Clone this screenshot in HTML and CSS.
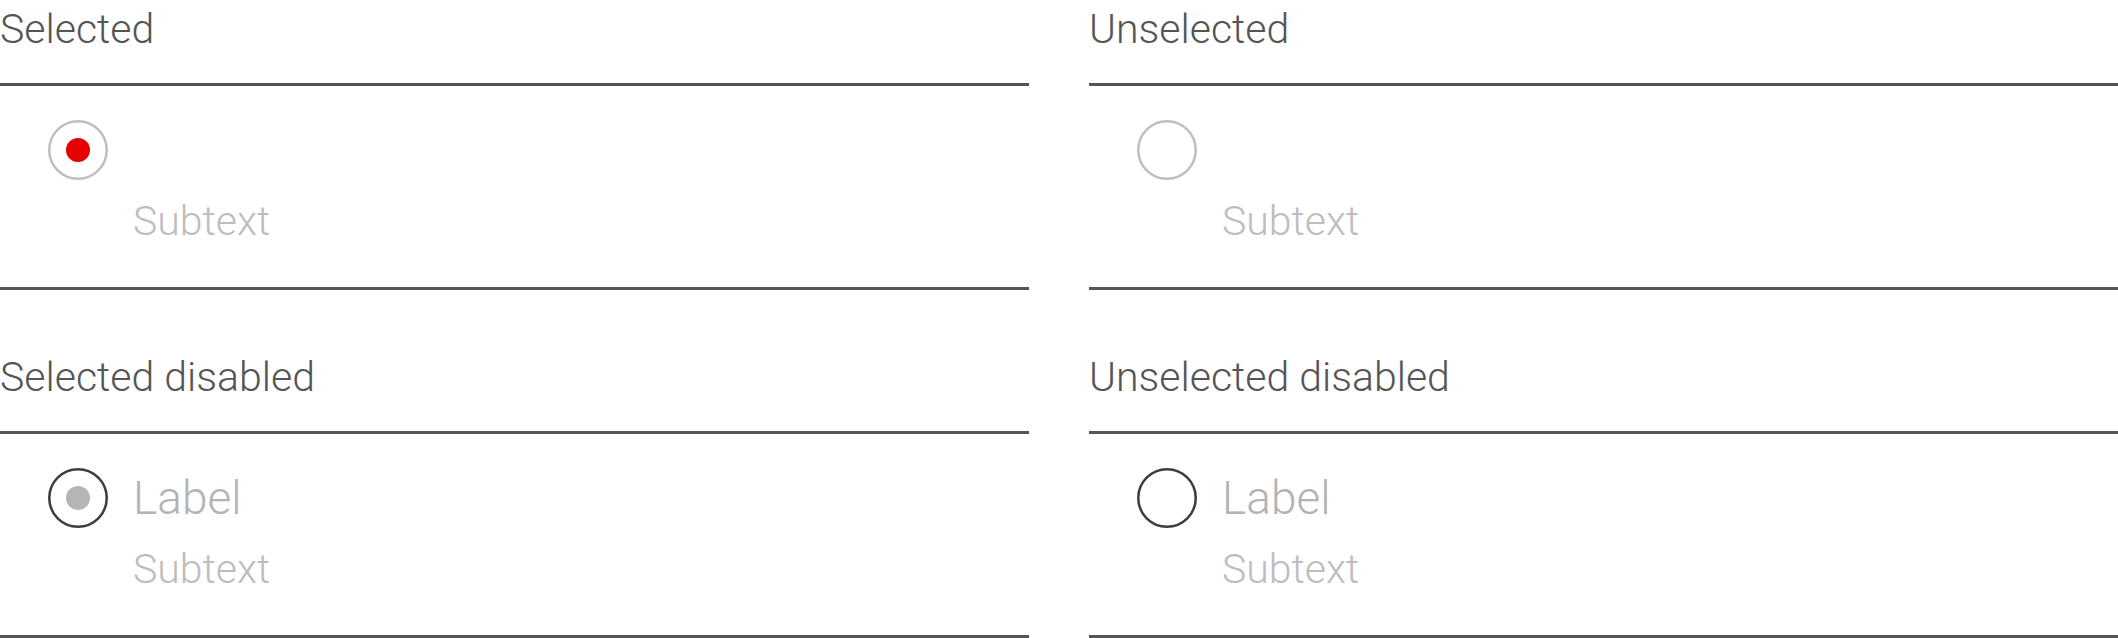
FILE: index.html
```html
<!DOCTYPE html>
<html>
<head>
<meta charset="utf-8">
<link rel="stylesheet" href="styles.css">
</head>
<body>
<div class="grid">
  <section class="block">
    <div class="title">Selected</div>
    <div class="item">
      <svg class="radio" viewBox="0 0 60 60" width="60" height="60"><circle class="ring ring-light" cx="30" cy="30" r="28.75"/><circle class="dot-red" cx="30" cy="30" r="12"/></svg>
      <div class="texts">
        <div class="label"></div>
        <div class="sub">Subtext</div>
      </div>
    </div>
  </section>
  <section class="block">
    <div class="title">Unselected</div>
    <div class="item">
      <svg class="radio" viewBox="0 0 60 60" width="60" height="60"><circle class="ring ring-light" cx="30" cy="30" r="28.75"/></svg>
      <div class="texts">
        <div class="label"></div>
        <div class="sub">Subtext</div>
      </div>
    </div>
  </section>
  <section class="block">
    <div class="title">Selected disabled</div>
    <div class="item">
      <svg class="radio" viewBox="0 0 60 60" width="60" height="60"><circle class="ring ring-dark" cx="30" cy="30" r="28.75"/><circle class="dot-gray" cx="30" cy="30" r="12"/></svg>
      <div class="texts">
        <div class="label">Label</div>
        <div class="sub">Subtext</div>
      </div>
    </div>
  </section>
  <section class="block">
    <div class="title">Unselected disabled</div>
    <div class="item">
      <svg class="radio" viewBox="0 0 60 60" width="60" height="60"><circle class="ring ring-dark" cx="30" cy="30" r="28.75"/></svg>
      <div class="texts">
        <div class="label">Label</div>
        <div class="sub">Subtext</div>
      </div>
    </div>
  </section>
</div>
</body>
</html>
```
FILE: styles.css
```css
html, body {
  margin: 0;
  padding: 0;
  background: #ffffff;
}
body {
  font-family: Roboto, "Liberation Sans", sans-serif;
  font-weight: 300;
}
.grid {
  display: grid;
  grid-template-columns: 1029px 1029px;
  column-gap: 60px;
  row-gap: 58px;
}
.block {
  display: flex;
  flex-direction: column;
}
.title {
  height: 86px;
  box-sizing: border-box;
  font-size: 41px;
  line-height: 48px;
  color: #555555;
  padding-top: 5px;
  border-bottom: 3px solid #555555;
}
.item {
  height: 204px;
  box-sizing: border-box;
  border-bottom: 3px solid #555555;
  display: flex;
  align-items: flex-start;
  padding: 34px 0 0 48px;
  gap: 25px;
}
.radio {
  display: block;
  flex: none;
}
.ring {
  fill: none;
  stroke-width: 2.5;
}
.ring-light { stroke: #bfbfbf; }
.ring-dark { stroke: #3d3d3d; }
.dot-red { fill: #e60000; }
.dot-gray { fill: #b5b5b5; }
.texts {
  display: flex;
  flex-direction: column;
}
.label {
  height: 60px;
  font-size: 46px;
  line-height: 60px;
  color: #b3b3b3;
}
.sub {
  font-size: 41px;
  line-height: 48px;
  color: #bdbdbd;
  margin-top: 17px;
}
```
